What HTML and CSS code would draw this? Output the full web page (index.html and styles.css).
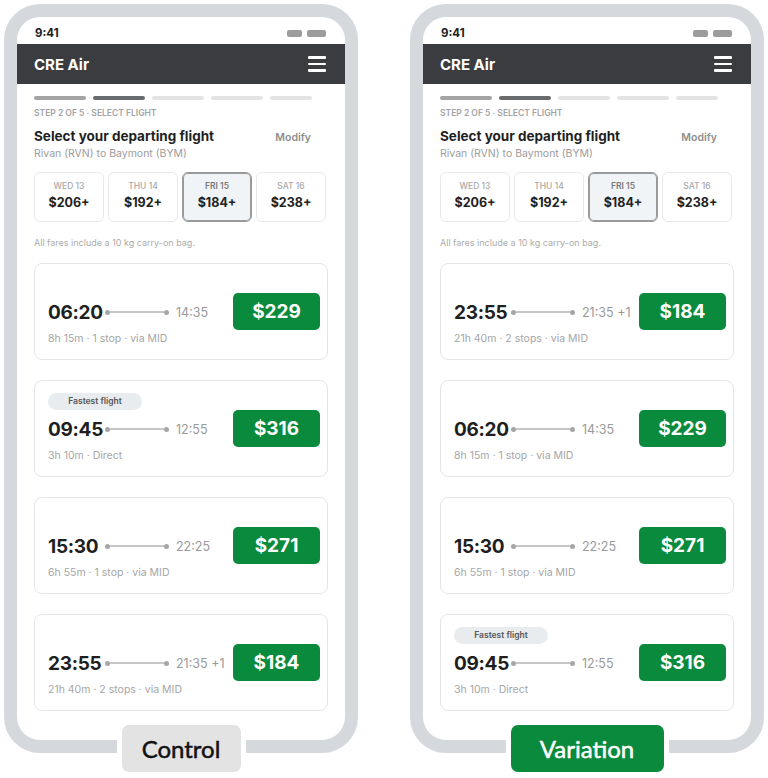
FILE: index.html
```html
<!DOCTYPE html>
<html lang="en">
<head>
    <meta charset="UTF-8">
    <meta name="viewport" content="width=device-width, initial-scale=1.0">
    <title>Flight Selection A/B Test</title>
    <link rel="stylesheet" href="styles.css">
</head>
<body>
    <div class="compare">

        <!-- Control: flights sorted by departure time -->
        <section class="variant">
            <div class="phone">
                <div class="screen">
                    <div class="status-bar">
                        <span class="clock">9:41</span>
                        <span class="status-icons"><i></i><i></i></span>
                    </div>
                    <header class="app-bar">
                        <span class="brand">CRE Air</span>
                        <span class="menu"><i></i><i></i><i></i></span>
                    </header>
                    <main class="content">
                        <div class="steps">
                            <span class="step done"></span>
                            <span class="step current"></span>
                            <span class="step"></span>
                            <span class="step"></span>
                            <span class="step last"></span>
                        </div>
                        <p class="step-label">Step 2 of 5 · Select flight</p>
                        <div class="title-row">
                            <h1>Select your departing flight</h1>
                            <span class="modify">Modify</span>
                        </div>
                        <p class="route">Rivan (RVN) to Baymont (BYM)</p>
                        <div class="dates">
                            <div class="date"><span class="day">WED 13</span><span class="fare">$206+</span></div>
                            <div class="date"><span class="day">THU 14</span><span class="fare">$192+</span></div>
                            <div class="date selected"><span class="day">FRI 15</span><span class="fare">$184+</span></div>
                            <div class="date"><span class="day">SAT 16</span><span class="fare">$238+</span></div>
                        </div>
                        <p class="note">All fares include a 10 kg carry-on bag.</p>

                        <div class="flights">
                            <div class="flight">
                                <div class="flight-info">
                                    <div class="flight-tags"></div>
                                    <div class="times">
                                        <span class="depart">06:20</span>
                                        <span class="track"><span class="line"></span></span>
                                        <span class="arrive">14:35</span>
                                    </div>
                                    <p class="meta">8h 15m · 1 stop · via MID</p>
                                </div>
                                <button class="price">$229</button>
                            </div>
                            <div class="flight">
                                <div class="flight-info">
                                    <div class="flight-tags"><span class="badge">Fastest flight</span></div>
                                    <div class="times">
                                        <span class="depart">09:45</span>
                                        <span class="track"><span class="line"></span></span>
                                        <span class="arrive">12:55</span>
                                    </div>
                                    <p class="meta">3h 10m · Direct</p>
                                </div>
                                <button class="price">$316</button>
                            </div>
                            <div class="flight">
                                <div class="flight-info">
                                    <div class="flight-tags"></div>
                                    <div class="times">
                                        <span class="depart">15:30</span>
                                        <span class="track"><span class="line"></span></span>
                                        <span class="arrive">22:25</span>
                                    </div>
                                    <p class="meta">6h 55m · 1 stop · via MID</p>
                                </div>
                                <button class="price">$271</button>
                            </div>
                            <div class="flight">
                                <div class="flight-info">
                                    <div class="flight-tags"></div>
                                    <div class="times">
                                        <span class="depart">23:55</span>
                                        <span class="track"><span class="line"></span></span>
                                        <span class="arrive">21:35 +1</span>
                                    </div>
                                    <p class="meta">21h 40m · 2 stops · via MID</p>
                                </div>
                                <button class="price">$184</button>
                            </div>
                        </div>
                    </main>
                </div>
            </div>
            <div class="tag tag-control">Control</div>
        </section>

        <!-- Variation: cheapest flight first -->
        <section class="variant">
            <div class="phone">
                <div class="screen">
                    <div class="status-bar">
                        <span class="clock">9:41</span>
                        <span class="status-icons"><i></i><i></i></span>
                    </div>
                    <header class="app-bar">
                        <span class="brand">CRE Air</span>
                        <span class="menu"><i></i><i></i><i></i></span>
                    </header>
                    <main class="content">
                        <div class="steps">
                            <span class="step done"></span>
                            <span class="step current"></span>
                            <span class="step"></span>
                            <span class="step"></span>
                            <span class="step last"></span>
                        </div>
                        <p class="step-label">Step 2 of 5 · Select flight</p>
                        <div class="title-row">
                            <h1>Select your departing flight</h1>
                            <span class="modify">Modify</span>
                        </div>
                        <p class="route">Rivan (RVN) to Baymont (BYM)</p>
                        <div class="dates">
                            <div class="date"><span class="day">WED 13</span><span class="fare">$206+</span></div>
                            <div class="date"><span class="day">THU 14</span><span class="fare">$192+</span></div>
                            <div class="date selected"><span class="day">FRI 15</span><span class="fare">$184+</span></div>
                            <div class="date"><span class="day">SAT 16</span><span class="fare">$238+</span></div>
                        </div>
                        <p class="note">All fares include a 10 kg carry-on bag.</p>

                        <div class="flights">
                            <div class="flight">
                                <div class="flight-info">
                                    <div class="flight-tags"></div>
                                    <div class="times">
                                        <span class="depart">23:55</span>
                                        <span class="track"><span class="line"></span></span>
                                        <span class="arrive">21:35 +1</span>
                                    </div>
                                    <p class="meta">21h 40m · 2 stops · via MID</p>
                                </div>
                                <button class="price">$184</button>
                            </div>
                            <div class="flight">
                                <div class="flight-info">
                                    <div class="flight-tags"></div>
                                    <div class="times">
                                        <span class="depart">06:20</span>
                                        <span class="track"><span class="line"></span></span>
                                        <span class="arrive">14:35</span>
                                    </div>
                                    <p class="meta">8h 15m · 1 stop · via MID</p>
                                </div>
                                <button class="price">$229</button>
                            </div>
                            <div class="flight">
                                <div class="flight-info">
                                    <div class="flight-tags"></div>
                                    <div class="times">
                                        <span class="depart">15:30</span>
                                        <span class="track"><span class="line"></span></span>
                                        <span class="arrive">22:25</span>
                                    </div>
                                    <p class="meta">6h 55m · 1 stop · via MID</p>
                                </div>
                                <button class="price">$271</button>
                            </div>
                            <div class="flight">
                                <div class="flight-info">
                                    <div class="flight-tags"><span class="badge">Fastest flight</span></div>
                                    <div class="times">
                                        <span class="depart">09:45</span>
                                        <span class="track"><span class="line"></span></span>
                                        <span class="arrive">12:55</span>
                                    </div>
                                    <p class="meta">3h 10m · Direct</p>
                                </div>
                                <button class="price">$316</button>
                            </div>
                        </div>
                    </main>
                </div>
            </div>
            <div class="tag tag-variation">Variation</div>
        </section>

    </div>
</body>
</html>
```

FILE: styles.css
```css
body {
    margin: 0;
    padding: 4px 0 0 4px;
    background: #fff;
    font-family: Inter, "Noto Sans", sans-serif;
    color: #1f1f1f;
}

p, h1 {
    margin: 0;
}

.compare {
    display: flex;
    gap: 52px;
}

.variant {
    display: flex;
    flex-direction: column;
    align-items: center;
}

/* Phone frame */
.phone {
    width: 354px;
    height: 749px;
    box-sizing: border-box;
    border: 13px solid #d5d8dc;
    border-radius: 36px;
    background: #d5d8dc;
}

.screen {
    height: 100%;
    background: #fff;
    border-radius: 23px;
    overflow: hidden;
}

.status-bar {
    height: 27px;
    box-sizing: border-box;
    padding: 5px 19px 0 18px;
    display: flex;
    align-items: center;
    justify-content: space-between;
}

.clock {
    font-size: 11.5px;
    font-weight: 700;
}

.status-icons {
    display: flex;
    gap: 5px;
}

.status-icons i {
    width: 15px;
    height: 7px;
    border-radius: 2px;
    background: #9c9c9c;
}

.status-icons i + i {
    width: 19px;
}

.app-bar {
    height: 40px;
    background: #3b3c3f;
    display: flex;
    align-items: center;
    justify-content: space-between;
    padding: 0 19px 0 17px;
}

.brand {
    color: #fff;
    font-size: 15px;
    font-weight: 700;
}

.menu {
    display: flex;
    flex-direction: column;
    gap: 4px;
}

.menu i {
    width: 18px;
    height: 2.5px;
    border-radius: 1px;
    background: #fff;
}

.content {
    padding: 12px 17px 0;
}

/* Progress through the booking steps */
.steps {
    display: flex;
    gap: 7px;
}

.step {
    width: 52px;
    height: 4px;
    border-radius: 2px;
    background: #e4e4e4;
}

.step.done {
    background: #a4a4a4;
}

.step.current {
    background: #6a6b6d;
}

.step.last {
    width: 42px;
}

.step-label {
    margin-top: 8px;
    font-size: 8.5px;
    line-height: 11px;
    font-weight: 600;
    color: #a3a3a3;
    text-transform: uppercase;
}

.title-row {
    margin-top: 8px;
    display: flex;
    align-items: baseline;
    justify-content: space-between;
    padding-right: 17px;
}

h1 {
    font-size: 13.5px;
    line-height: 18px;
    font-weight: 700;
    color: #1f1f1f;
}

.modify {
    font-size: 10.5px;
    font-weight: 600;
    color: #8e8e8e;
}

.route {
    margin-top: 2px;
    font-size: 10.5px;
    line-height: 14px;
    color: #9d9d9d;
}

/* Date picker */
.dates {
    margin-top: 11px;
    display: grid;
    grid-template-columns: repeat(4, 70px);
    gap: 4px;
}

.date {
    height: 50px;
    box-sizing: border-box;
    padding-top: 8px;
    border: 1px solid #e8e8e8;
    border-radius: 6px;
    display: flex;
    flex-direction: column;
    align-items: center;
    gap: 3px;
}

.date.selected {
    background: #f1f4f7;
    border-color: #9a9a9a;
    box-shadow: inset 0 0 0 1px #9a9a9a;
}

.day {
    font-size: 8.5px;
    line-height: 11px;
    font-weight: 500;
    color: #a8a8a8;
}

.date.selected .day {
    color: #7a7a7a;
    font-weight: 600;
}

.fare {
    font-size: 12.5px;
    line-height: 15px;
    font-weight: 700;
    color: #222;
}

.note {
    margin-top: 15px;
    font-size: 9px;
    line-height: 12px;
    color: #acacac;
}

/* Flight results */
.flights {
    margin-top: 14px;
    display: flex;
    flex-direction: column;
    gap: 20px;
}

.flight {
    height: 97px;
    box-sizing: border-box;
    padding: 12px 7px 13px 13px;
    border: 1px solid #e6e6e6;
    border-radius: 8px;
    display: flex;
    align-items: center;
}

.flight-info {
    flex: 1;
}

.flight-tags {
    height: 17px;
    margin-bottom: 8px;
    display: flex;
}

.badge {
    width: 94px;
    height: 17px;
    line-height: 17px;
    border-radius: 9px;
    background: #e9ecef;
    text-align: center;
    font-size: 8.5px;
    font-weight: 600;
    color: #555;
}

.times {
    height: 22px;
    display: flex;
    align-items: center;
}

.depart {
    width: 57px;
    font-size: 19px;
    font-weight: 700;
    letter-spacing: -0.3px;
    color: #1f1f1f;
}

.track {
    width: 64px;
    display: flex;
    align-items: center;
}

.track::before,
.track::after {
    content: "";
    width: 5px;
    height: 5px;
    border-radius: 50%;
    background: #a6a6a6;
}

.line {
    flex: 1;
    height: 1.5px;
    background: #c6c6c6;
}

.arrive {
    margin-left: 7px;
    font-size: 12.5px;
    color: #9a9a9a;
}

.meta {
    margin-top: 9px;
    font-size: 10.5px;
    line-height: 14px;
    color: #a6a6a6;
}

.price {
    width: 87px;
    height: 37px;
    border: none;
    border-radius: 5px;
    background: #0a8a3c;
    color: #fff;
    font-family: inherit;
    font-size: 19px;
    font-weight: 700;
    cursor: pointer;
}

/* Variant labels sitting over the bottom of each frame */
.tag {
    position: relative;
    margin-top: -33px;
    height: 47px;
    border: 5px solid #fff;
    border-radius: 12px;
    display: flex;
    align-items: center;
    justify-content: center;
    font-family: Lato, "Noto Sans", sans-serif;
    font-size: 24px;
    font-weight: 400;
    -webkit-text-stroke: 0.5px currentColor;
}

.tag-control {
    width: 119px;
    background: #e3e3e3;
    color: #111;
}

.tag-variation {
    width: 153px;
    background: #0a8a3c;
    color: #fff;
}
```
